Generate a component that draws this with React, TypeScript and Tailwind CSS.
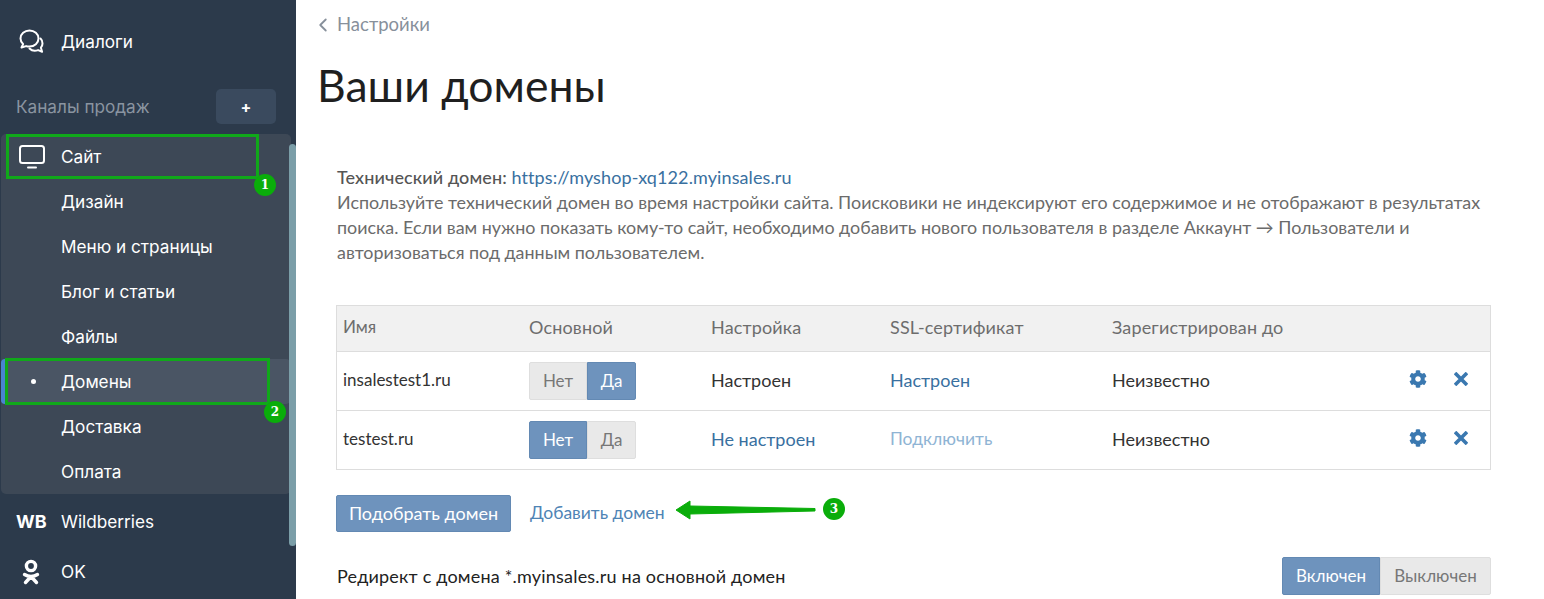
import React from 'react';
import { ChevronLeft } from 'lucide-react';
import { FaCog } from 'react-icons/fa';

const bodyFont = "font-['Lato','Noto_Sans',sans-serif]";

const SUB_ITEMS = ['Дизайн', 'Меню и страницы', 'Блог и статьи', 'Файлы', 'Домены', 'Доставка', 'Оплата'];

const Badge: React.FC<{ n: number; className: string }> = ({ n, className }) => (
    <span className={`absolute w-[22px] h-[22px] rounded-full bg-[#0aad0a] text-white text-[12px] font-bold flex items-center justify-center font-['DejaVu_Serif',serif] ${className}`}>
        {n}
    </span>
);

const Toggle: React.FC<{ left: string; right: string; active: 'left' | 'right'; leftW: string; rightW: string }> = ({ left, right, active, leftW, rightW }) => {
    const on = 'bg-[#6e93bd] text-white border-[#6389b3]';
    const off = 'bg-[#e9e9e9] text-[#777] border-[#dedede]';
    return (
        <div className="flex h-[38px] text-[17px]">
            <div className={`${leftW} flex items-center justify-center border rounded-l-[2px] ${active === 'left' ? on : off}`}>{left}</div>
            <div className={`${rightW} flex items-center justify-center border rounded-r-[2px] ${active === 'right' ? on : off}`}>{right}</div>
        </div>
    );
};

const RowActions: React.FC = () => (
    <div className="flex items-center gap-[27px] text-[#3a78b0] -mt-[4px]">
        <FaCog size={18} />
        <svg width="14" height="14" viewBox="0 0 14 14" stroke="currentColor" strokeWidth="3.6" fill="none">
            <path d="M1 1l12 12M13 1L1 13" />
        </svg>
    </div>
);

const Sidebar: React.FC = () => (
    <aside className="relative w-[296px] h-[599px] shrink-0 bg-[#2c3a4b] text-white overflow-hidden font-['Inter',sans-serif] text-[17.2px]">
        <div className="flex items-center h-[45px] mt-[19px]">
            <div className="w-[61px] pl-[18px] shrink-0">
                <svg width="27" height="27" viewBox="0 0 27 27" fill="none" stroke="white" strokeWidth="2" strokeLinejoin="round" strokeLinecap="round">
                    <path d="M11.5 2.5c-5 0-9 3.4-9 8 0 2.3 1 4.2 2.6 5.6L3.5 19.5l4.6-1.4c1.1.4 2.2.5 3.4.5 5 0 9-3.6 9-8.1s-4-8-9-8z" />
                    <path d="M22.5 10.5c1.6 1.4 2 3.2 2 5 0 1.6-.6 3-1.6 4.2l1.2 4-4-1.6c-3 1.2-6.6.4-8.6-1.6" />
                </svg>
            </div>
            <span>Диалоги</span>
        </div>

        <div className="flex items-center justify-between h-[35px] mt-[25px] pl-[16px] pr-[20px]">
            <span className="text-[#8a94a0]">Каналы продаж</span>
            <button className="w-[60px] h-[35px] rounded-[5px] bg-[#3a4a5e] flex items-center justify-center text-white font-bold text-[16px]">+</button>
        </div>

        <div className="mt-[10px] ml-[1px] w-[290px] h-[360px] rounded-[5px] bg-[#3d4856]">
            <div className="flex items-center h-[45px]">
                <div className="w-[60px] pl-[18px] shrink-0">
                    <svg width="26" height="24" viewBox="0 0 26 24" fill="none" stroke="white" strokeWidth="2" strokeLinecap="round">
                        <rect x="1" y="1" width="24" height="17" rx="2.5" />
                        <path d="M9 22.5h8" />
                    </svg>
                </div>
                <span>Сайт</span>
            </div>
            {SUB_ITEMS.map((item) => {
                const active = item === 'Домены';
                return (
                    <div key={item} className={`relative flex items-center h-[45px] pl-[60px] ${active ? 'bg-[#4a5564] rounded-[5px]' : ''}`}>
                        {active && <span className="absolute left-0 top-0 bottom-0 w-[4px] rounded-l-[5px] bg-[#4a84d0]" />}
                        {active && <span className="absolute left-[30px] top-[20px] w-[5px] h-[5px] rounded-full bg-white" />}
                        {item}
                    </div>
                );
            })}
        </div>

        <div className="flex items-center h-[45px] mt-[5px]">
            <span className="w-[61px] pl-[16px] shrink-0 font-bold text-[18px]">WB</span>
            <span>Wildberries</span>
        </div>
        <div className="flex items-center h-[45px] mt-[5px]">
            <div className="w-[61px] pl-[22px] shrink-0">
                <svg width="18" height="26" viewBox="0 0 18 26" fill="none" stroke="white" strokeWidth="3.4" strokeLinecap="round">
                    <circle cx="9" cy="7" r="4.6" />
                    <path d="M2.5 15.5c4 2.4 9 2.4 13 0M9 17.5l-5.5 6M9 17.5l5.5 6" />
                </svg>
            </div>
            <span>OK</span>
        </div>

        {/* Scrollbar */}
        <div className="absolute left-[289px] top-[144px] w-[7px] h-[402px] rounded-[4px] bg-[#7b9ea8]" />
    </aside>
);

const App: React.FC = () => {
    const cols = 'grid grid-cols-[186px_182px_179px_222px_1fr] items-center pl-[6px]';
    return (
        <div className={`relative flex w-[1544px] h-[599px] overflow-hidden bg-white ${bodyFont} text-[#222]`}>
            <Sidebar />

            <main className="flex-1 pl-[21px]">
                <a className="flex items-center h-[20px] mt-[15px] text-[18.5px] text-[#87909b]">
                    <ChevronLeft size={22} strokeWidth={2} className="-ml-[5px] mr-[3px]" />
                    Настройки
                </a>
                <h1 className="mt-[24px] text-[44.5px] leading-[52px] text-[#1f1f1f]">Ваши домены</h1>

                <div className="ml-[20px] w-[1154px]">
                    <p className="mt-[54px] text-[17.9px] leading-[25px] text-[#6b6b6b]">
                        <span className="text-[18px] tracking-[0.1px] font-medium text-[#555]">Технический домен: </span>
                        <a className="text-[18px] tracking-[0.1px] text-[#39709f]">https://myshop-xq122.myinsales.ru</a>
                        <br />
                        Используйте технический домен во время настройки сайта. Поисковики не индексируют его содержимое и не отображают в результатах
                        поиска. Если вам нужно показать кому-то сайт, необходимо добавить нового пользователя в разделе Аккаунт → Пользователи и
                        авторизоваться под данным пользователем.
                    </p>

                    <div className="mt-[40px] -ml-[1px] border border-[#dddddd] text-[18px]">
                        <div className={`${cols} h-[45px] pb-[3px] bg-[#f1f1f1] text-[#6d6d6d]`}>
                            <span className="text-[17px]">Имя</span>
                            <span className="tracking-[0.15px]">Основной</span>
                            <span className="tracking-[0.15px]">Настройка</span>
                            <span className="tracking-[0.15px]">SSL-сертификат</span>
                            <span className="tracking-[0.15px]">Зарегистрирован до</span>
                        </div>
                        <div className={`${cols} h-[59px] border-t border-[#dddddd] text-[#333]`}>
                            <span className="text-[17px] pb-[2px]">insalestest1.ru</span>
                            <div><Toggle left="Нет" right="Да" active="right" leftW="w-[58px]" rightW="w-[49px]" /></div>
                            <span className="pb-[2px]">Настроен</span>
                            <a className="pb-[2px] text-[#39709f]">Настроен</a>
                            <div className="flex items-center justify-between pr-[22px]">
                                <span className="pb-[2px]">Неизвестно</span>
                                <RowActions />
                            </div>
                        </div>
                        <div className={`${cols} h-[59px] border-t border-[#dddddd] text-[#333]`}>
                            <span className="text-[17px] pb-[2px]">testest.ru</span>
                            <div><Toggle left="Нет" right="Да" active="left" leftW="w-[58px]" rightW="w-[49px]" /></div>
                            <a className="pb-[2px] text-[#39709f]">Не настроен</a>
                            <a className="pb-[2px] text-[#8fb4d4] text-[17.5px]">Подключить</a>
                            <div className="flex items-center justify-between pr-[22px]">
                                <span className="pb-[2px]">Неизвестно</span>
                                <RowActions />
                            </div>
                        </div>
                    </div>

                    <div className="flex items-center mt-[25px] -ml-[1px] text-[18px]">
                        <button className="w-[175px] h-[37px] rounded-[2px] border border-[#6389b3] bg-[#6e93bd] text-white">Подобрать домен</button>
                        <a className="ml-[19px] text-[#4f84b5] text-[17.5px]">Добавить домен</a>
                    </div>

                    <div className="flex items-center justify-between mt-[25px] text-[18px]">
                        <span className="text-[#222] tracking-[0.2px]">Редирект с домена *.myinsales.ru на основной домен</span>
                        <Toggle left="Включен" right="Выключен" active="left" leftW="w-[98px]" rightW="w-[111px]" />
                    </div>
                </div>
            </main>

            {/* Annotation overlays */}
            <div className="absolute left-[6px] top-[134px] w-[253px] h-[45px] border-[3px] border-[#10a81a] pointer-events-none" />
            <Badge n={1} className="left-[254px] top-[174px]" />
            <div className="absolute left-[5px] top-[358px] w-[265px] h-[47px] border-[3px] border-[#10a81a] pointer-events-none" />
            <Badge n={2} className="left-[264px] top-[401px]" />
            <svg className="absolute left-[674px] top-[499px]" width="146" height="22" viewBox="0 0 146 22" fill="#0aad0a" stroke="#0aad0a" strokeWidth="1" strokeLinejoin="round">
                <path d="M2 11 L16 2 L16 7 L141 9.5 L141 12 L16 15 L16 20 Z" />
            </svg>
            <Badge n={3} className="left-[823px] top-[498px]" />
        </div>
    );
};

export default App;
